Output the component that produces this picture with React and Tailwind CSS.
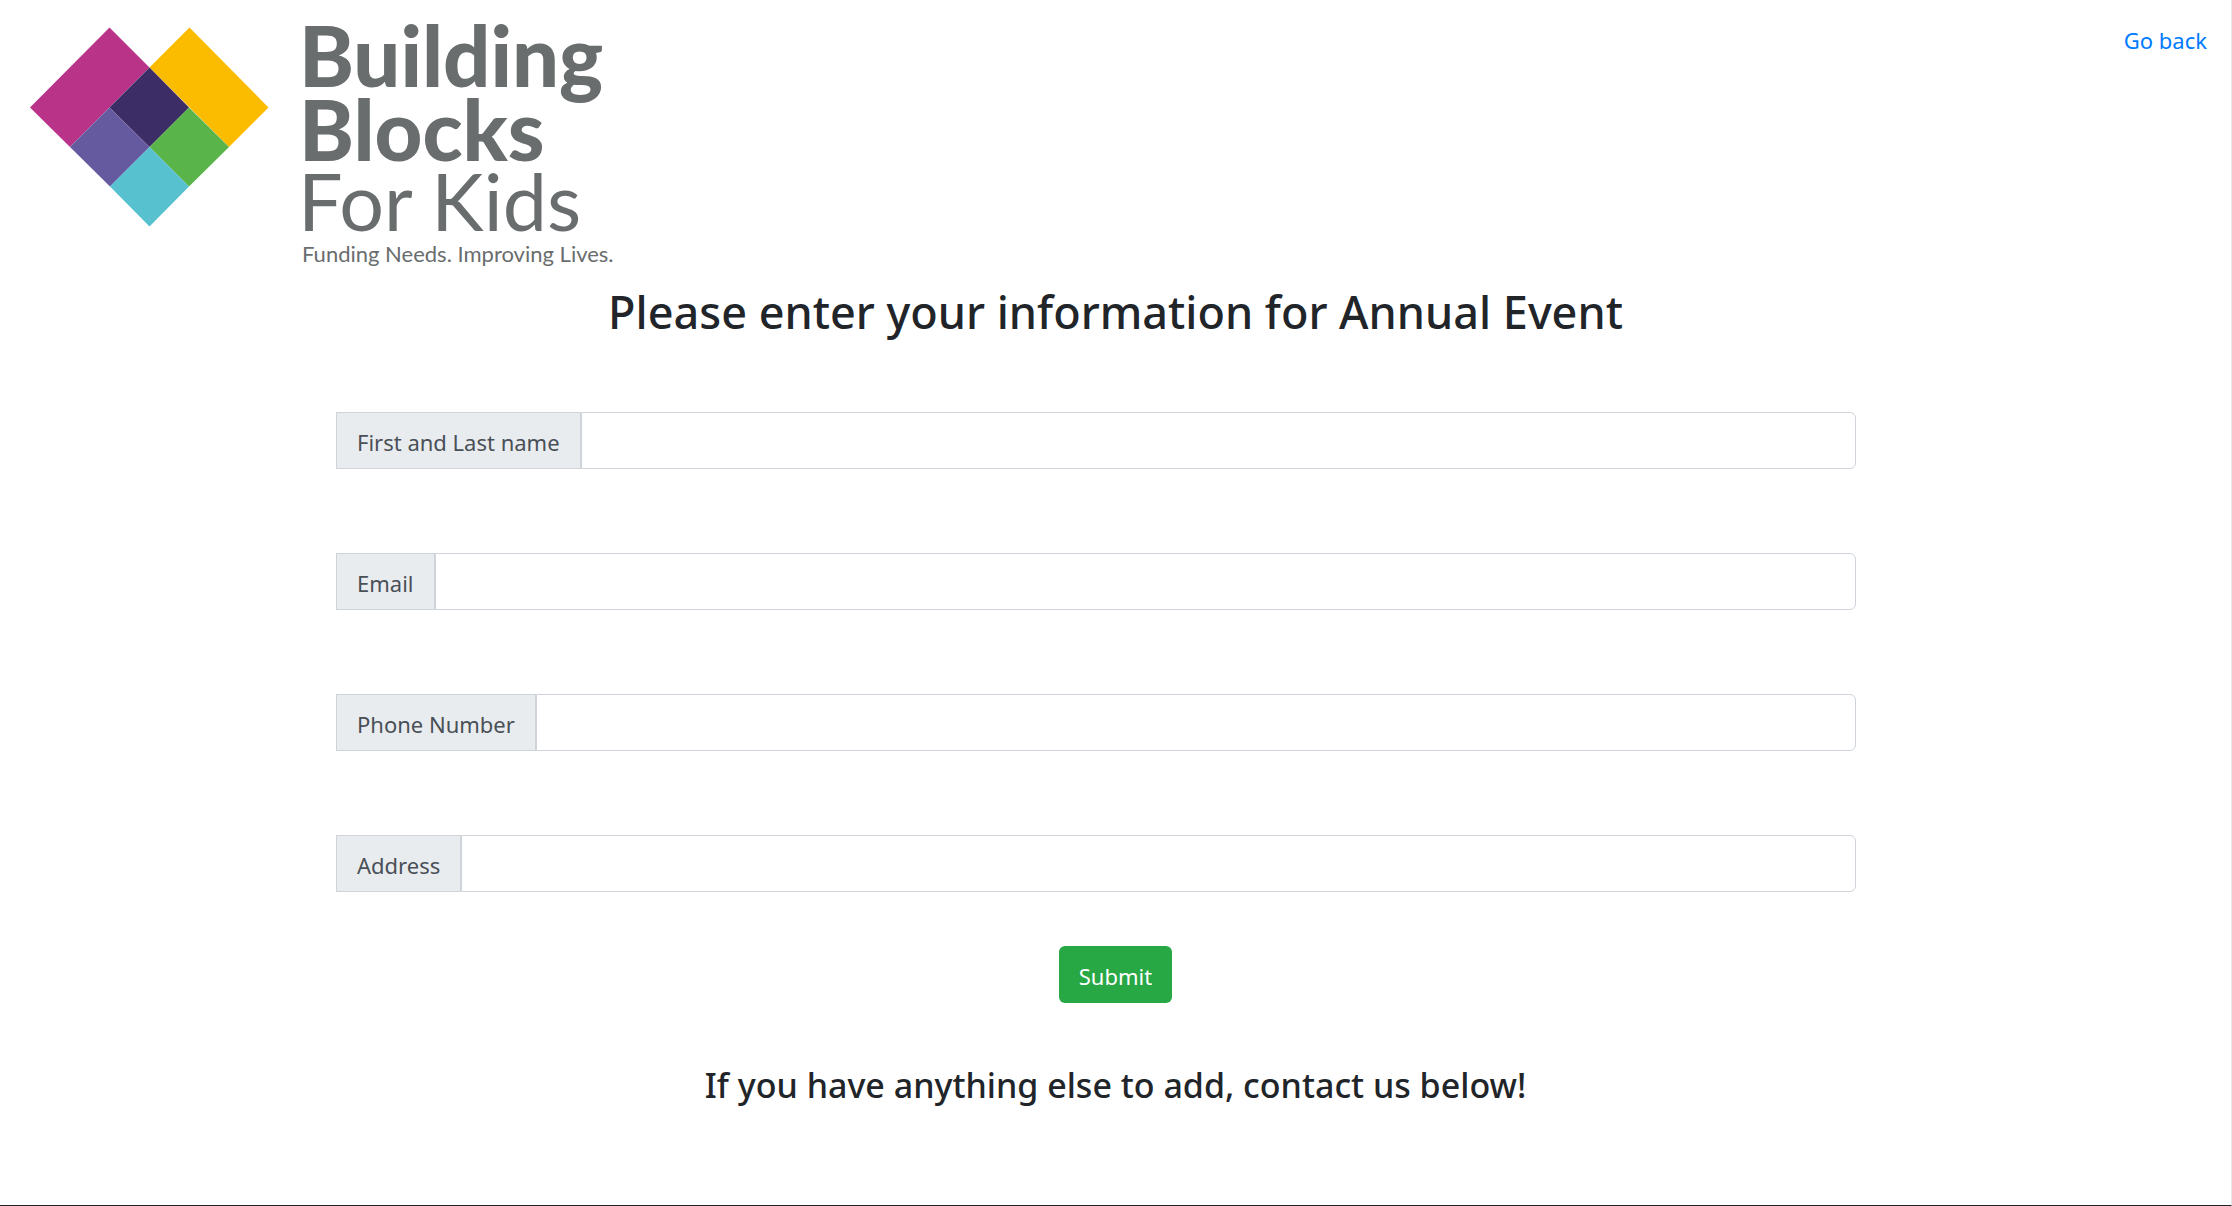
const fields = [
  { id: "name", label: "First and Last name", type: "text" },
  { id: "email", label: "Email", type: "email" },
  { id: "phone", label: "Phone Number", type: "tel" },
  { id: "address", label: "Address", type: "text" },
];

function Logo() {
  return (
    <svg
      viewBox="0 0 620 272"
      className="h-[272px] w-[620px] font-['Lato',sans-serif]"
      fill="#696d6d"
      role="img"
      aria-label="Building Blocks For Kids"
    >
      <g shapeRendering="geometricPrecision">
        <path d="M109.5 27.5 149.5 67.5 70 147 30 107.5Z" fill="#b93488" />
        <path d="M189.5 27.5 268.5 107.5 229 147 149.5 67.5Z" fill="#fbbc00" />
        <path d="M149.5 67.5 189 107.5 149.5 147 109.5 107.5Z" fill="#3d2d66" />
        <path d="M109.5 107.5 149.5 147 110 186.5 70 147Z" fill="#655a9f" />
        <path d="M189 107.5 229 147 189 186.5 149.5 147Z" fill="#59b54a" />
        <path d="M149.5 147 189 186.5 149.5 226.5 110 186.5Z" fill="#58c1d0" />
      </g>
      <text x="299" y="87" fontSize="83" fontWeight="900">Building</text>
      <text x="299" y="161" fontSize="83" fontWeight="900">Blocks</text>
      <text x="298" y="231" fontSize="79">For Kids</text>
      <text x="302" y="262" fontSize="22">Funding Needs. Improving Lives.</text>
    </svg>
  );
}

function Field({ id, label, type }) {
  return (
    <div className="flex h-[57px]">
      <label
        htmlFor={id}
        className="flex items-center border border-[#ced4da] bg-[#e9ecef] px-5 pt-0.5 text-[22px] leading-8 whitespace-nowrap text-[#495057]"
      >
        {label}
      </label>
      <input
        id={id}
        name={id}
        type={type}
        className="min-w-0 flex-1 rounded-r-md border border-[#ced4da] bg-white px-5 text-[22px] text-[#495057] outline-none focus:border-[#80bdff]"
      />
    </div>
  );
}

export default function App() {
  return (
    <div className="flex min-h-screen flex-col border-r border-b border-r-[#e8e8e8] border-b-[#212529] bg-white font-['Noto_Sans','Open_Sans',sans-serif] text-[#212529]">
      <header className="flex items-start justify-between">
        <Logo />
        <a href="#back" className="mt-6 mr-6 text-[22px] leading-8 text-[#007bff]">
          Go back
        </a>
      </header>
      <main>
        <h1 className="mt-2.5 text-center text-[45px] leading-[60px] font-medium">
          Please enter your information for Annual Event
        </h1>
        <form onSubmit={(e) => e.preventDefault()}>
          <div className="mt-[70px] mr-[375px] ml-[336px] flex flex-col gap-[84px]">
            {fields.map((f) => (
              <Field key={f.id} {...f} />
            ))}
          </div>
          <div className="mt-[54px] flex justify-center">
            <button
              type="submit"
              className="h-[57px] rounded-md bg-[#28a745] px-5 pt-0.5 text-[22px] leading-8 text-white"
            >
              Submit
            </button>
          </div>
        </form>
        <h2 className="mt-[58px] text-center text-[34px] leading-[48px] font-medium">
          If you have anything else to add, contact us below!
        </h2>
      </main>
    </div>
  );
}
